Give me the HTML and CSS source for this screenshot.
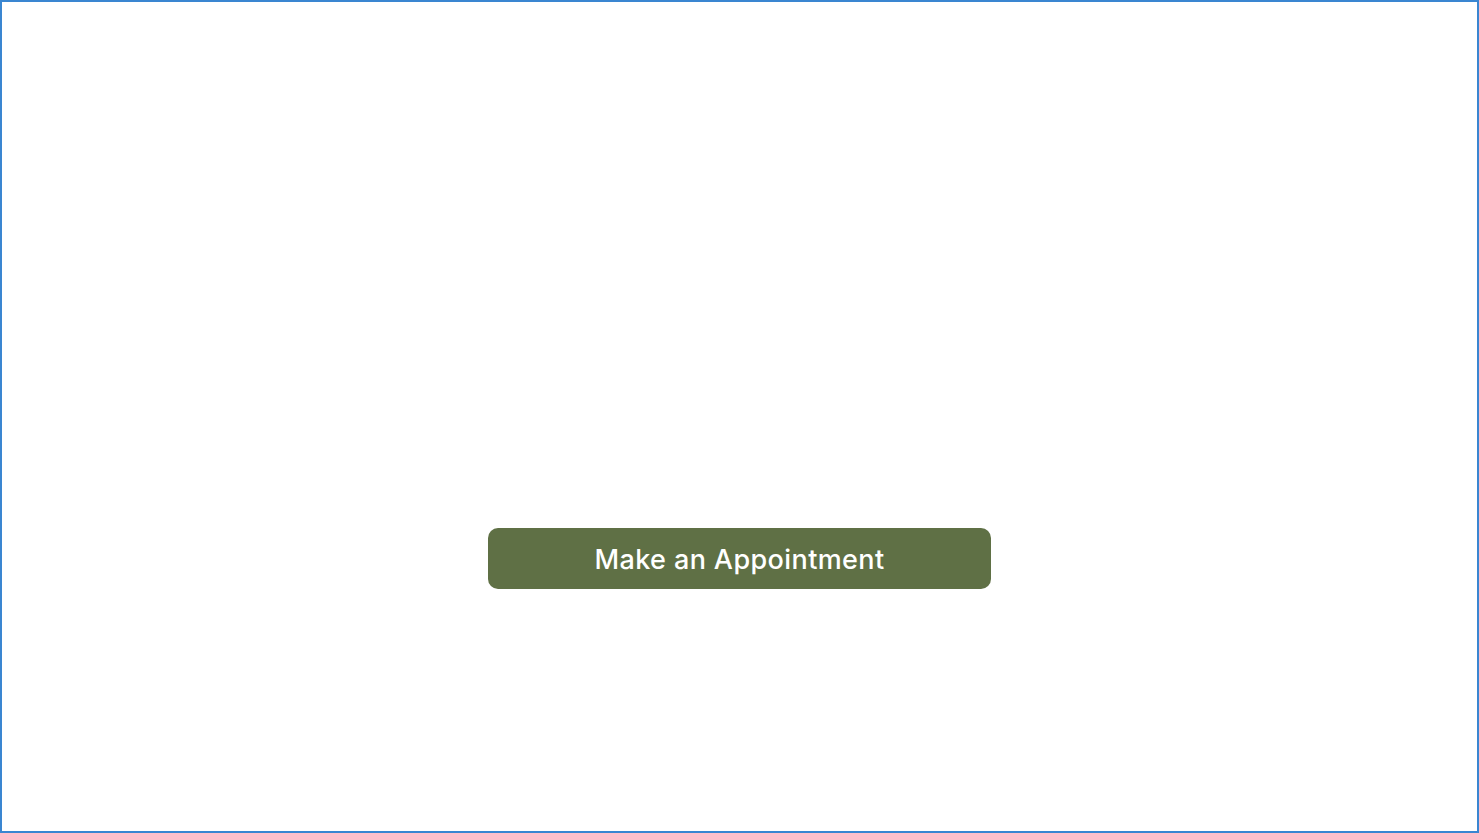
FILE: index.html
```
<!DOCTYPE html>
<html lang="en">
<head>
<meta charset="utf-8">
<title>Make an Appointment</title>
<link rel="stylesheet" href="styles.css">
</head>
<body>
<main class="frame">
  <a class="cta" href="#">Make an Appointment</a>
</main>
</body>
</html>
```
FILE: styles.css
```
html, body {
  margin: 0;
  padding: 0;
  background: #ffffff;
}
.frame {
  box-sizing: border-box;
  width: 1479px;
  height: 833px;
  border: 2px solid #3a86d1;
  display: flex;
  flex-direction: column;
  align-items: center;
  padding-top: 526px;
}
.cta {
  box-sizing: border-box;
  width: 503px;
  height: 61px;
  border-radius: 10px;
  background: #5f7045;
  color: #ffffff;
  text-decoration: none;
  font-family: "Inter", "Open Sans", sans-serif;
  font-size: 27px;
  font-weight: 500;
  letter-spacing: 0.4px;
  display: flex;
  align-items: center;
  justify-content: center;
  padding-top: 2px;
}
```
